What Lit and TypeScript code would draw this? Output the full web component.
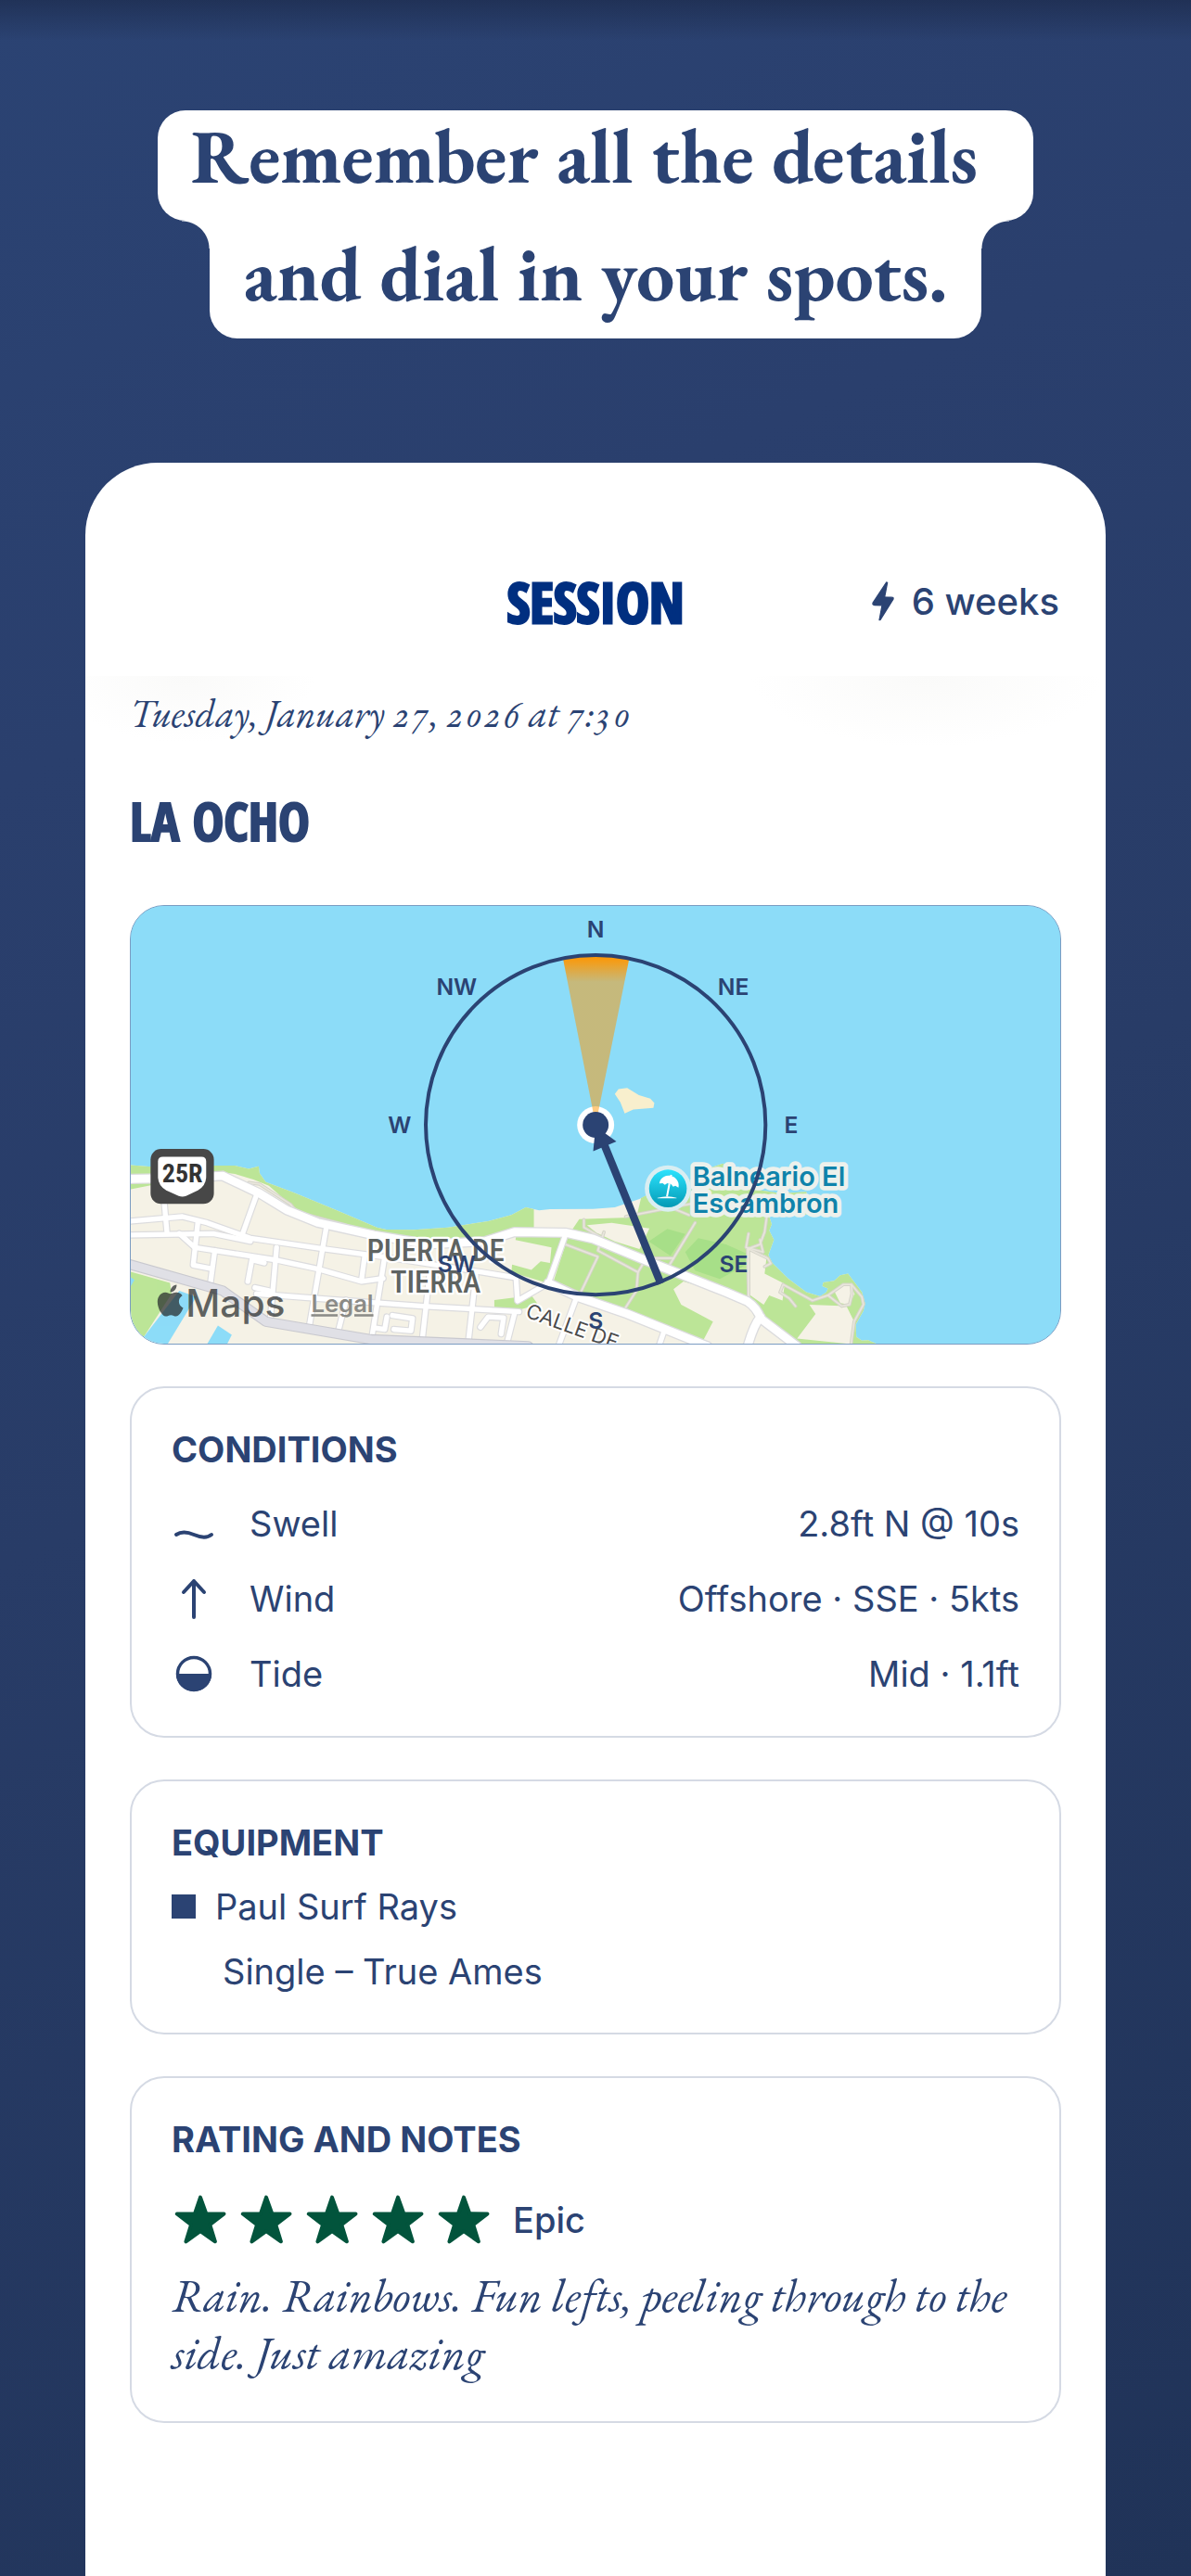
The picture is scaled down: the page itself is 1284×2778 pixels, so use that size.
import { LitElement, html, css, svg } from "lit";
import { customElement } from "lit/decorators.js";

/* ---------- Map ---------- */

const COAST_WEST =
  "M30 893L90 898L300 895L370 895L415 905L447 897L450 920L470 948L560 982L700 1040L830 1095L860 1102L950 1103L1060 1095L1190 1075L1265 1055L1312 1030";
const COAST_EAST =
  "L1740 972L1850 940L1900 905L1950 888L2000 915L2040 970L2140 985L2220 980L2232 1055L2180 1050L2100 1060L2108 1085L2100 1105L2115 1135L2097 1185L2110 1210L2160 1260L2220 1305L2265 1318L2285 1305L2290 1293L2272 1285L2275 1273L2310 1268L2330 1250L2355 1245L2370 1265L2400 1305L2410 1340L2405 1365L2380 1410L2382 1450L2400 1462L2420 1460L2450 1473";

const BEIGE_BLOCKS = [
  "M1250 1130L1395 1160L1390 1210L1360 1205L1330 1233L1265 1215L1200 1200Z",
  "M1510 1088L1590 1080L1712 1098L1680 1165L1600 1140L1540 1112Z",
  "M1790 1295L1822 1270L1960 1310L2040 1360L2060 1400L2170 1473L1880 1473L1918 1400L1815 1345Z",
  "M2030 1165L2092 1187L2085 1245L2150 1278L2143 1332L2100 1315L2082 1345L2035 1312Z",
  "M2230 1345L2350 1350L2375 1400L2365 1473L2190 1455L2250 1375Z",
  "M2310 1300L2340 1280L2365 1282L2376 1310L2360 1345L2330 1340Z",
];

const STREETS = [
  "M30 1075L200 1060L280 1080L420 1130L660 1165L850 1190L1170 1240L1280 1258",
  "M30 1120L300 1115L420 1140",
  "M190 1115L240 1160L500 1200L640 1230L780 1270L850 1260",
  "M440 1310L700 1330L980 1350L1290 1368",
  "M1440 1120L1385 1275L1285 1333L1280 1258",
  "M140 1000L150 1110",
  "M440 990L395 1115",
  "M250 1080L235 1217L290 1228",
  "M305 1170L290 1280",
  "M505 1160L485 1390",
  "M665 1100L610 1420",
  "M855 1190L810 1473",
  "M1000 1250L975 1473",
  "M1150 1250L1125 1473",
  "M1475 1325L1420 1473",
  "M790 1190L780 1265",
  "M730 1330L705 1430",
  "M1275 1375L1250 1473",
  "M412 1270L425 1200L465 1210",
  "M435 1290L480 1300",
  "M820 1420L855 1425L862 1385",
  "M880 1380L945 1390L940 1430L885 1425",
  "M1165 1418L1190 1385L1240 1388L1232 1440",
  "M1760 1430L1745 1473",
];

const AVENUES = [
  "M30 938L200 935L330 928L450 985L540 1040L640 1080L820 1120L1000 1150L1180 1140L1275 1110L1440 1112L1530 1132L1700 1202L1960 1305L2030 1335Q2060 1355 2072 1390L2190 1480",
  "M2072 1385Q2050 1410 2030 1480",
  "M1385 1275L1480 1320L1640 1375L1900 1480",
];

const FOOTPATHS = [
  "M1440 1150L1545 1190L1490 1305",
  "M1400 1270L1480 1305",
  "M1500 1070L1500 1095L1560 1130",
  "M1565 1110L1545 1170L1675 1240L1670 1300L1625 1370",
  "M1675 1240L1690 1215",
  "M1635 1060L1850 1018",
  "M1780 1030L1840 1055",
  "M1860 1080L1775 1220",
  "M1690 1195L1790 1195",
  "M2092 1060L2085 1110L2070 1150L2030 1165L2033 1320",
  "M2033 1115L2025 1160L2080 1175L2070 1135",
  "M2033 1320L2033 1165L2095 1195L2105 1212L2085 1222",
  "M2185 1350L2165 1325L2135 1305L2145 1280L2240 1332L2290 1315L2340 1280L2366 1280L2400 1320L2405 1345L2375 1400L2365 1473",
  "M2290 1315L2335 1350L2360 1345L2368 1310L2366 1280",
  "M415 950L450 955L550 1020L570 1045L720 1085L800 1115",
];

const COMPASS: [string, number, number][] = [
  ["N", 1538, 156],
  ["NE", 1984, 342],
  ["E", 2171, 791],
  ["SE", 1985, 1239],
  ["S", 1538, 1424],
  ["SW", 1088, 1239],
  ["W", 903, 791],
  ["NW", 1088, 342],
];

@customElement("spot-map")
class SpotMap extends LitElement {
  static styles = css`
    :host {
      display: block;
      overflow: hidden;
      border-radius: 37px;
      border: 1px solid #7b9cc2;
      background: #8cdcf8;
    }
    .art {
      display: block;
      width: 100%;
      height: auto;
    }
    .land { fill: #f5f2e6; }
    .green { fill: #bce597; }
    .grove { fill: #a7df88; }
    .water { fill: #8cdcf8; }
    .isle { fill: #f8efcd; }
    .line { fill: none; stroke-linejoin: round; stroke-linecap: round; }
    .casing { stroke: #dcdcde; }
    .white { stroke: #fff; }
    .gray { stroke: #e0e0e6; }
    .edge { stroke: #c9c9cf; }
    .path { stroke: #d5d4c9; }
    .path-in { stroke: #e9e6dc; }
    text { font-family: Inter, "Liberation Sans", sans-serif; }
    .dir {
      font-size: 74px;
      font-weight: 600;
      fill: #2b4373;
      text-anchor: middle;
    }
    .halo {
      paint-order: stroke;
      stroke-linejoin: round;
    }
    .district {
      font-family: "Roboto Condensed", Roboto, sans-serif;
      font-size: 99px;
      font-weight: 500;
      fill: #5e6361;
      stroke: #fff;
      stroke-width: 14px;
      text-anchor: middle;
    }
    .street {
      font-size: 66px;
      fill: #4b4b4b;
      stroke: #fff;
      stroke-width: 12px;
    }
    .poi {
      font-size: 87px;
      font-weight: 600;
      fill: #0f83ab;
      stroke: #edf1ec;
      stroke-width: 28px;
    }
    .route {
      font-family: "Roboto Condensed", Roboto, sans-serif;
      font-size: 84px;
      font-weight: 700;
      fill: #333;
      text-anchor: middle;
    }
    .brand { opacity: 0.72; fill: #262a2c; }
    .brand-name { font-size: 122px; font-weight: 500; }
    .legal {
      font-size: 77px;
      font-weight: 600;
      fill: #8b8b87;
      text-decoration: underline;
    }
    .ring { fill: none; stroke: #2b4373; stroke-width: 12px; }
    .navy { fill: #2b4373; }
    .shaft { stroke: #2b4373; stroke-width: 25px; }
  `;

  private stroke(paths: string[], cls: string, width: number) {
    return paths.map((d) => svg`<path class="line ${cls}" stroke-width=${width} d=${d} />`);
  }

  render() {
    return html`
      <svg class="art" viewBox="33 54 3009 1416" role="group" aria-label="Map of La Ocho">
        <defs>
          <linearGradient id="cone" gradientUnits="userSpaceOnUse" x1="0" y1="212" x2="0" y2="300">
            <stop offset="0" stop-color="#ff9600" />
            <stop offset="0.15" stop-color="#ff9600" stop-opacity="0.95" />
            <stop offset="1" stop-color="#ff9600" stop-opacity="0.5" />
          </linearGradient>
          <linearGradient id="poi" x1="0" y1="0" x2="0" y2="1">
            <stop offset="0" stop-color="#2ce2fd" />
            <stop offset="1" stop-color="#039ab5" />
          </linearGradient>
        </defs>

        <rect class="water" x="0" y="0" width="3100" height="1500" />
        <path class="land" d="${COAST_WEST}L1355 1040L1390 1036L1530 1035L1600 1030L1680 1003${COAST_EAST}L30 1473Z" />
        <path class="green" d="${COAST_WEST}L1338 1036L1338 1100L1280 1110L1180 1135L1060 1140L950 1145L850 1125L720 1085L620 1060L560 1030L480 960L430 940L370 922L320 915L30 972Z" />
        <path class="green" d="M1685 1000${COAST_EAST}L1880 1473L1400 1275L1450 1120L1485 1068L1670 1062Z" />
        <path class="green" d="M1280 1125L1435 1125L1380 1275L1265 1240L1268 1210Z" />
        <path class="green" d="M1210 1330L1330 1315L1352 1345L1290 1362L1210 1357Z" />
        <path class="green" d="M30 1238L160 1275L165 1310L75 1450L60 1473L30 1473Z" />
        <path class="water" d="M190 1300L245 1320L152 1473L70 1473L75 1450Z" />
        <path class="water" d="M315 1413L360 1443L345 1473L280 1473Z" />
        <path class="water" d="M30 1255L45 1265L30 1290Z" />
        ${BEIGE_BLOCKS.map((d) => svg`<path class="land" d=${d} />`)}
        <path class="grove" d="M1710 1140L1770 1100L1828 1116L1780 1187Z" />
        <path class="grove" d="M1828 1175L1870 1130L1960 1150L2028 1180L2028 1215L1940 1262L1860 1235Z" />
        <path class="isle" d="M1600 663L1612 647L1640 643L1678 667L1715 678L1728 692L1725 708L1660 713L1632 726L1618 690Z" />

        ${this.stroke(FOOTPATHS, "path", 11)} ${this.stroke(FOOTPATHS, "path-in", 5)}
        ${this.stroke(STREETS, "casing", 23)} ${this.stroke(AVENUES, "casing", 34)}
        ${this.stroke(STREETS, "white", 16)} ${this.stroke(AVENUES, "white", 26)}
        <path class="line edge" stroke-width="34" d="M20 1212L330 1300L470 1400L810 1458L1320 1480" />
        <path class="line gray" stroke-width="27" d="M20 1212L330 1300L470 1400L810 1458L1320 1480" />

        <rect x="97" y="841" width="205" height="178" rx="34" fill="#474747" />
        <path fill="#fff" d="M137 866H262Q277 866 277 881V930Q277 960 250 975L212 993Q200 998 188 993L148 975Q121 960 121 930V881Q121 866 137 866Z" />
        <text class="route" x="200" y="949">25R</text>

        <text class="halo street" transform="translate(1308 1384) rotate(20)">CALLE DE</text>
        <text class="halo district" x="1020" y="1205">PUERTA DE</text>
        <text class="halo district" x="1020" y="1307">TIERRA</text>

        <text class="halo poi" x="1852" y="960">Balneario El</text>
        <text class="halo poi" x="1852" y="1047">Escambron</text>
        <circle cx="1772" cy="969" r="75" fill="#d9eef2" />
        <circle cx="1772" cy="969" r="61" fill="url(#poi)" />
        <g fill="#fff" transform="translate(1772 966)">
          <path d="M-28 -13C-25 -32 -8 -43 10 -38C28 -33 38 -17 34 0L24 -6L17 -3L10 -11L-2 -14L-10 -9L-17 -14Z" />
          <path d="M8 -42L14 -40L11 -34L6 -36ZM2 -14L8 -12L0 29H-6Z" />
          <path d="M-34 33Q0 24 28 33L28 35L-34 35Z" />
        </g>

        <g class="brand">
          <path transform="translate(110 1281) scale(4.25)" d="M12.152 6.896c-.948 0-2.415-1.078-3.96-1.04-2.04.027-3.91 1.183-4.961 3.014-2.117 3.675-.546 9.103 1.519 12.09 1.013 1.454 2.208 3.09 3.792 3.039 1.52-.065 2.09-.987 3.935-.987 1.831 0 2.35.987 3.96.948 1.637-.026 2.676-1.48 3.676-2.948 1.156-1.688 1.636-3.325 1.662-3.415-.039-.013-3.182-1.221-3.22-4.857-.026-3.04 2.48-4.494 2.597-4.559-1.429-2.09-3.623-2.324-4.39-2.376-2-.156-3.675 1.09-4.61 1.09zM15.53 3.83c.843-1.012 1.4-2.427 1.245-3.83-1.207.052-2.662.805-3.532 1.818-.78.896-1.454 2.338-1.273 3.714 1.338.104 2.715-.688 3.559-1.701" />
          <text class="brand-name" x="211" y="1383">Maps</text>
        </g>
        <a href="#legal"><text class="legal" x="617" y="1370">Legal</text></a>

        <circle cx="1538" cy="763" r="60" fill="#fff" />
        <path fill="url(#cone)" d="M1538 763L1432 223A550 550 0 0 1 1647 223Z" />
        <circle class="ring" cx="1538" cy="763" r="550" />
        <line class="shaft" x1="1749" y1="1277" x2="1565" y2="825" />
        <path class="navy" d="M1538 768L1605 817L1530 848Z" />
        <circle class="navy" cx="1538" cy="763" r="42" />
        ${COMPASS.map(([t, x, y]) => svg`<text class="dir" x=${x} y=${y}>${t}</text>`)}
      </svg>
    `;
  }
}

/* ---------- Icons ---------- */

const boltIcon = html`<svg class="bolt" viewBox="52 78 72 130" aria-hidden="true">
  <path fill="currentColor" stroke="currentColor" stroke-width="4" stroke-linejoin="round" d="M99 81L55 148Q53 154 59 155L85 156L76 204L79 203L121 136Q123 130 117 130L93 129L102 82Z" />
</svg>`;

const waveIcon = html`<svg class="icon" viewBox="0 0 48 48" aria-hidden="true">
  <path fill="none" stroke="currentColor" stroke-width="4" stroke-linecap="round" d="M5 36C11 32 17 33 24 36C31 39 38 40 43 36" />
</svg>`;

const arrowIcon = html`<svg class="icon" viewBox="0 0 48 48" aria-hidden="true">
  <path fill="none" stroke="currentColor" stroke-width="4" stroke-linecap="round" stroke-linejoin="round" d="M24 44V5M13 17L24 5L35 17" />
</svg>`;

const tideIcon = html`<svg class="icon" viewBox="0 0 48 48" aria-hidden="true">
  <circle cx="24" cy="24" r="17.5" fill="none" stroke="currentColor" stroke-width="3.5" />
  <path fill="currentColor" d="M5 24H43A19 19 0 0 1 5 24Z" />
</svg>`;

const starIcon = html`<svg class="star" viewBox="40 84 168 160" aria-hidden="true">
  <path fill="currentColor" stroke="currentColor" stroke-width="12" stroke-linejoin="round" d="M124 92L143 145L201 146L155 181L172 236L124 202L77 236L94 181L48 146L106 145Z" />
</svg>`;

const CONDITIONS = [
  { icon: waveIcon, label: "Swell", value: "2.8ft N @ 10s" },
  { icon: arrowIcon, label: "Wind", value: "Offshore · SSE · 5kts" },
  { icon: tideIcon, label: "Tide", value: "Mid · 1.1ft" },
];

@customElement("app-root")
class AppRoot extends LitElement {
  static styles = css`
    :host {
      display: block;
      --navy: #2b4373;
      --serif: "EB Garamond", "Liberation Serif", serif;
      --sans: Inter, "Liberation Sans", sans-serif;
      --display: "Open Sans Condensed", "Roboto Condensed", sans-serif;
      color: var(--navy);
      font-family: var(--sans);
    }
    h1, h2, h3, p, dl, dt, dd, ul { margin: 0; padding: 0; }

    .page {
      box-sizing: border-box;
      min-height: 100vh;
      display: flex;
      flex-direction: column;
      gap: 134px;
      padding: 119px 92px 0;
      background:
        linear-gradient(rgba(20, 30, 55, 0.45), rgba(20, 30, 55, 0) 44px),
        linear-gradient(155deg, #2b4373, #2a3f6d 25%, #283c67 50%, #203358);
    }

    .headline {
      display: flex;
      flex-direction: column;
      align-items: center;
      font: 700 82px/97px var(--serif);
    }
    .pill {
      background: #fff;
      border-radius: 30px;
      padding: 0 60px 22px 36px;
    }
    .pill.lower {
      position: relative;
      border-radius: 0 0 30px 30px;
      padding: 8px 36px 22px;
    }
    .pill.lower::before,
    .pill.lower::after {
      content: "";
      position: absolute;
      top: 0;
      width: 30px;
      height: 30px;
    }
    .pill.lower::before {
      right: 100%;
      background: radial-gradient(circle at 0 100%, transparent 29px, #fff 30px);
    }
    .pill.lower::after {
      left: 100%;
      background: radial-gradient(circle at 100% 100%, transparent 29px, #fff 30px);
    }

    .phone {
      flex: 1;
      background: #fff;
      border-radius: 78px 78px 0 0;
    }
    .bar {
      box-sizing: border-box;
      height: 230px;
      padding: 69px 50px 0;
      display: grid;
      grid-template-columns: 1fr auto 1fr;
      align-items: center;
    }
    .title {
      grid-column: 2;
      font: 700 60px/80px var(--display);
      color: #002f80;
      -webkit-text-stroke: 3px #002f80;
    }
    .streak {
      justify-self: end;
      display: flex;
      align-items: center;
      gap: 19px;
      font-size: 40px;
      font-weight: 500;
      line-height: 48px;
    }
    .bolt { width: 24px; height: 43px; }

    .content {
      padding: 13px 48px 160px;
      background:
        radial-gradient(190px 76px at 907px 0, #fafaf9, transparent),
        radial-gradient(140px 72px at 108px 0, #fafaf9, transparent);
    }
    .date {
      font: italic 400 42px/56px var(--serif);
      font-variant-numeric: oldstyle-nums;
      margin-bottom: 47px;
    }
    .spot {
      font: 700 57px/80px var(--display);
      -webkit-text-stroke: 2px var(--navy);
      margin-bottom: 51px;
    }
    .stack {
      display: flex;
      flex-direction: column;
      gap: 45px;
    }

    .card {
      border: 2px solid #d5dae4;
      border-radius: 37px;
      padding: 42px 43px;
      font-size: 38px;
    }
    .card-title {
      font-size: 38px;
      font-weight: 700;
      line-height: 48px;
    }

    .conditions { padding-bottom: 26px; }
    .facts { margin-top: 16px; }
    .fact {
      display: flex;
      align-items: center;
      line-height: 81px;
    }
    .fact dt {
      display: flex;
      align-items: center;
      gap: 36px;
    }
    .fact dd { margin-left: auto; }
    .icon { width: 48px; height: 48px; }

    .equipment { padding-bottom: 31px; }
    .gear {
      margin-top: 10px;
      list-style: none;
      line-height: 70px;
    }
    .board {
      display: flex;
      align-items: center;
      gap: 21px;
    }
    .swatch {
      width: 26px;
      height: 26px;
      background: var(--navy);
    }
    .fin { padding-left: 55px; }

    .rating {
      display: flex;
      align-items: center;
      gap: 25px;
      height: 60px;
      margin: 33px 0 21px;
      padding-left: 3px;
      font-weight: 500;
    }
    .stars {
      display: flex;
      gap: 15px;
      color: #02543c;
    }
    .star { width: 56px; height: 53px; }
    .notes { font: italic 400 50px/62px var(--serif); }
  `;

  render() {
    return html`
      <main class="page">
        <h1 class="headline">
          <span class="pill">Remember all the details</span>
          <span class="pill lower">and dial in your spots.</span>
        </h1>

        <section class="phone">
          <header class="bar">
            <h2 class="title">SESSION</h2>
            <div class="streak">${boltIcon}<span>6 weeks</span></div>
          </header>

          <div class="content">
            <p class="date">Tuesday, January 27, 2026 at 7:30</p>
            <h2 class="spot">LA OCHO</h2>

            <div class="stack">
              <spot-map></spot-map>

              <section class="card conditions">
                <h3 class="card-title">CONDITIONS</h3>
                <dl class="facts">
                  ${CONDITIONS.map(
                    (c) => html`<div class="fact"><dt>${c.icon}<span>${c.label}</span></dt><dd>${c.value}</dd></div>`
                  )}
                </dl>
              </section>

              <section class="card equipment">
                <h3 class="card-title">EQUIPMENT</h3>
                <ul class="gear">
                  <li class="board"><span class="swatch"></span><span>Paul Surf Rays</span></li>
                  <li class="fin">Single – True Ames</li>
                </ul>
              </section>

              <section class="card">
                <h3 class="card-title">RATING AND NOTES</h3>
                <div class="rating">
                  <span class="stars" role="img" aria-label="5 out of 5">${[1, 2, 3, 4, 5].map(() => starIcon)}</span>
                  <span>Epic</span>
                </div>
                <p class="notes">Rain. Rainbows. Fun lefts, peeling through to the side. Just amazing</p>
              </section>
            </div>
          </div>
        </section>
      </main>
    `;
  }
}
